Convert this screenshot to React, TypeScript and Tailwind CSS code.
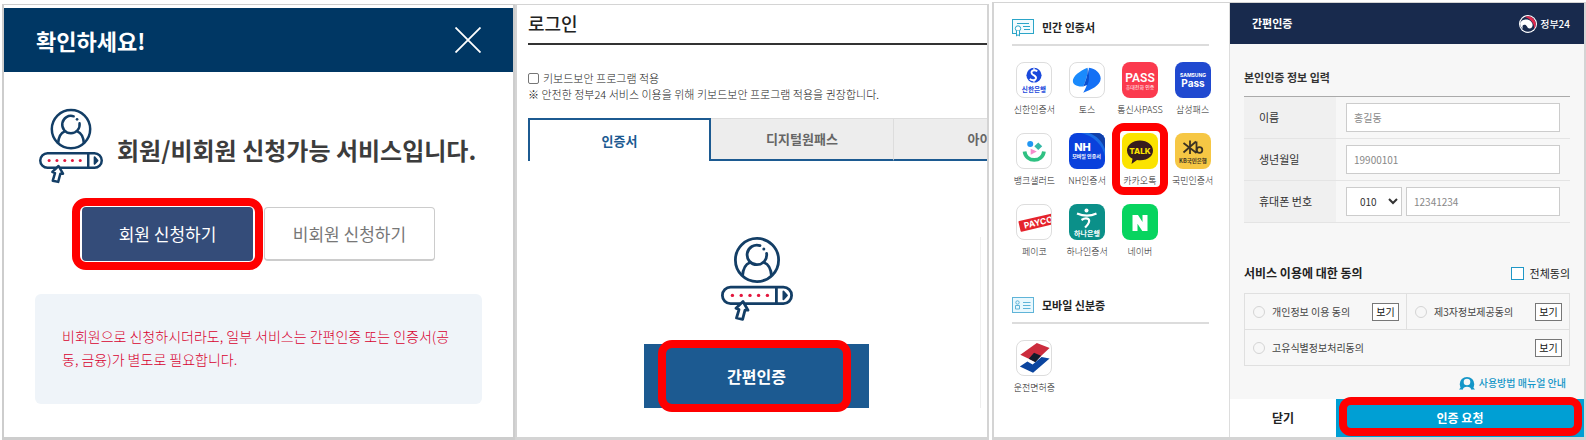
import type { ReactNode } from 'react'

function LoginIcon({ className }: { className?: string }) {
  return (
    <svg viewBox="0 0 72 84" className={className} fill="none" stroke="#133e66" strokeWidth="2.8" aria-hidden="true">
      <circle cx="36" cy="23" r="21.6" />
      <path d="M21.5 39C22 31 25 27 29 25.5" />
      <path d="M50.5 39C50 31 47 27 43 25.5" />
      <path d="M39 8.6A9.8 9.8 0 1 0 45.6 16.4" strokeLinecap="round" />
      <circle cx="42.8" cy="12" r="1.5" fill="#133e66" stroke="none" />
      <rect x="1.4" y="50.2" width="69.2" height="16.4" rx="8.2" fill="#fff" />
      <path d="M55.4 50v17" />
      <path d="M62.5 54.6l3.4 3.8-3.4 3.8z" fill="#133e66" strokeWidth="2" strokeLinejoin="round" />
      <g fill="#e3173e" stroke="none">
        <circle cx="11.4" cy="58.4" r="1.7" />
        <circle cx="20.2" cy="58.4" r="1.7" />
        <circle cx="29" cy="58.4" r="1.7" />
        <circle cx="37.6" cy="58.4" r="1.7" />
        <circle cx="46.4" cy="58.4" r="1.7" />
      </g>
      <path d="M22 64.500L27 73.200L24 73.200L21.600 82.400L15.500 81L18 72.600L15 71.200Z" fill="#fff" strokeWidth="2.8" strokeLinejoin="round" />
    </svg>
  )
}

/* Red guide box drawn over the control the reader has to press */
function Highlight({ className }: { className: string }) {
  return <span aria-hidden="true" className={`pointer-events-none absolute border-[#ff0000] ${className}`} />
}

function ConfirmPanel() {
  return (
    <section className="mt-1 flex flex-col border-x-2 border-t border-b-3 border-[#cdcdcd] bg-white pt-[3px]">
      <header className="flex h-16 items-center justify-between bg-[#003764] pr-8 pl-8">
        <h2 className="text-[22px] font-bold text-white">확인하세요!</h2>
        <button type="button" aria-label="닫기" className="text-white">
          <svg viewBox="0 0 26 26" className="h-[26px] w-[26px]" stroke="currentColor" strokeWidth="1.8">
            <path d="M0.5 0.5l25 25M25.5 0.5l-25 25" />
          </svg>
        </button>
      </header>

      <div className="flex items-center gap-[14px] pt-9 pl-[35px]">
        <LoginIcon className="h-[76px] w-16" />
        <p className="pt-2 text-2xl font-bold whitespace-nowrap text-[#3c3c3c]">회원/비회원 신청가능 서비스입니다.</p>
      </div>

      <div className="flex gap-[11px] pt-[23px] pl-[78px] text-[17px]">
        <div className="relative">
          <button type="button" className="h-[54px] w-[171px] rounded-sm bg-[#344c79] text-white">
            회원 신청하기
          </button>
          <Highlight className="-inset-x-[10px] -inset-y-[9px] rounded-[14px] border-8" />
        </div>
        <button type="button" className="h-[54px] w-[171px] rounded-sm border border-b-2 border-[#ccc] text-[#777]">
          비회원 신청하기
        </button>
      </div>

      <div className="mx-[31px] mt-[33px] mb-8 h-[110px] rounded-md bg-[#eff4f9] px-[27px] pt-[31px]">
        <p className="text-sm leading-[23px] font-light text-[#d8002f]">
          비회원으로 신청하시더라도, 일부 서비스는 간편인증 또는 인증서(공동, 금융)가 별도로 필요합니다.
        </p>
      </div>
    </section>
  )
}

function LoginPanel() {
  return (
    <section className="mt-1 flex flex-col overflow-hidden border-t border-r-2 border-b-3 border-l-2 border-[#d4d4d4] bg-white">
      <div className="pl-[11px]">
        <h2 className="h-10 border-b-2 border-[#333] pt-1 text-lg leading-7 font-medium text-[#222]">로그인</h2>

        <div className="pt-[25px] text-[11px] leading-4 whitespace-nowrap text-[#222]">
          <div className="flex items-center gap-1">
            <input
              id="keyboard-security"
              type="checkbox"
              className="h-[11px] w-[11px] appearance-none rounded-xs border border-[#767676]"
            />
            <label htmlFor="keyboard-security" className="font-light">키보드보안 프로그램 적용</label>
          </div>
          <p className="font-light">※ 안전한 정부24 서비스 이용을 위해 키보드보안 프로그램 적용을 권장합니다.</p>
        </div>

        <div role="tablist" className="mt-4 flex h-[43px] text-[13px] font-bold whitespace-nowrap">
          <button type="button" role="tab" aria-selected="true" className="w-[183px] shrink-0 border-2 border-b-0 border-[#1c5a91] text-[#1c5a91]">
            인증서
          </button>
          <button type="button" role="tab" aria-selected="false" className="w-[183px] shrink-0 border-t border-r border-b-2 border-t-[#ddd] border-r-[#ddd] border-b-[#1c5a91] bg-[#ededed] text-[#666]">
            디지털원패스
          </button>
          <button type="button" role="tab" aria-selected="false" className="w-[183px] shrink-0 border-t border-b-2 border-t-[#ddd] border-b-[#1c5a91] bg-[#ededed] text-[#666]">
            아이디
          </button>
        </div>
      </div>

      <div className="mt-[76px] mr-[6px] mb-7 ml-4 flex h-[171px] flex-col items-center justify-between border-r border-[#eee]">
        <LoginIcon className="h-[84px] w-[72px]" />
        <div className="relative">
          <button type="button" className="h-16 w-[225px] bg-[#1c5a91] text-base font-bold text-white">
            간편인증
          </button>
          <Highlight className="right-[18px] left-[14px] -inset-y-1 rounded-[14px] border-8" />
        </div>
      </div>
    </section>
  )
}

interface Cert {
  name: string
  icon: ReactNode
  outlined?: boolean
  picked?: boolean
}

const certs: Cert[] = [
  {
    name: '신한인증서',
    outlined: true,
    icon: (
      <>
        <circle cx="18" cy="13" r="8" fill="#1a49dc" />
        <path d="M21.500 8.800C18 6.500 14 8.500 15.800 11.300C17.200 13.500 21 13.500 20 16.500C19 18.900 15.800 18.800 13.500 17" fill="none" stroke="#fff" strokeWidth="2" />
        <path d="M18 5v2.500M18 19v2" stroke="#fff" strokeWidth="1.200" />
        <text x="18" y="31" fontSize="7" fontWeight="700" fill="#1a49dc" textAnchor="middle">신한은행</text>
      </>
    ),
  },
  {
    name: '토스',
    outlined: true,
    icon: (
      <>
        <path d="M20 5C27 6 32.500 10.500 32.500 16.500C32.500 24 22 28.500 14 31.500C16 28 17.500 25 18 22Z" fill="#1470f5" />
        <path d="M18.500 5C10 8.500 3 14 3 19C3 23.500 9 25 14 25C16 20 19.500 12 18.500 5Z" fill="#1a8afc" />
        <path d="M14 25C16 20 19.500 12 18.500 5C21 12 20.500 19 18.500 23Z" fill="#0a4fd0" />
      </>
    ),
  },
  {
    name: '통신사PASS',
    icon: (
      <>
        <rect width="36" height="36" fill="#fb3a4e" />
        <text x="18" y="19.500" fontSize="12" fontWeight="600" fill="#fff" textAnchor="middle" fontFamily="Roboto, sans-serif">PASS</text>
        <text x="18" y="27" fontSize="5" fill="#fff" textAnchor="middle">휴대전화 인증</text>
      </>
    ),
  },
  {
    name: '삼성패스',
    icon: (
      <>
        <rect width="36" height="36" fill="#2049d0" />
        <text x="18" y="14.500" fontSize="5" fontWeight="700" fill="#fff" textAnchor="middle" fontFamily="Inter, sans-serif">SAMSUNG</text>
        <text x="18" y="25" fontSize="10" fontWeight="700" fill="#fff" textAnchor="middle" fontFamily="Inter, sans-serif">Pass</text>
      </>
    ),
  },
  {
    name: '뱅크샐러드',
    outlined: true,
    icon: (
      <>
        <circle cx="14" cy="10.500" r="3.200" fill="#2196f3" />
        <path d="M22.500 9L26.700 13L22.500 17L18.300 13Z" fill="#35b8a6" />
        <path d="M14.500 15.500L21 18.500L14.500 22Z" fill="#f78ccb" />
        <path d="M8 18.500C9.500 30.500 27 30.500 28.500 18.500" fill="none" stroke="#2fc182" strokeWidth="4" />
      </>
    ),
  },
  {
    name: 'NH인증서',
    icon: (
      <>
        <rect width="36" height="36" fill="#0a41dc" />
        <path d="M12 0H36V24C34 12 25 3 12 0Z" fill="#1a6be4" />
        <path d="M20 0H36V16C33 8 28 3 20 0Z" fill="#113fa8" />
        <text x="13.500" y="18" fontSize="11" fontWeight="800" fill="#fff" textAnchor="middle" fontFamily="Inter, sans-serif">NH</text>
        <text x="17.500" y="25" fontSize="5" fontWeight="700" fill="#fff" textAnchor="middle">모바일 인증서</text>
      </>
    ),
  },
  {
    name: '카카오톡',
    picked: true,
    icon: (
      <>
        <rect width="36" height="36" fill="#fbe300" />
        <path d="M18 7.500C10.500 7.500 5 12 5 17.500C5 21 7 24 10.500 25.700L9.500 31L15 27C25 28.500 31 23.500 31 17.500C31 12 25.500 7.500 18 7.500Z" fill="#371d1e" />
        <text x="18" y="20.500" fontSize="8" fontWeight="800" fill="#fbe300" textAnchor="middle" fontFamily="Inter, sans-serif">TALK</text>
      </>
    ),
  },
  {
    name: '국민인증서',
    icon: (
      <>
        <rect width="36" height="36" fill="#f6c744" />
        <path d="M15 7.500V21M8.500 10L21.500 20M21 8.500L8.500 19.500M21.500 8.500V20" fill="none" stroke="#3c3223" strokeWidth="1.800" />
        <circle cx="24.500" cy="17" r="2.800" fill="none" stroke="#3c3223" strokeWidth="1.800" />
        <text x="18" y="29.500" fontSize="5.500" fontWeight="700" fill="#3c3223" textAnchor="middle">KB국민은행</text>
      </>
    ),
  },
  {
    name: '페이코',
    outlined: true,
    icon: (
      <g transform="rotate(-13 18 18)">
        <rect x="2" y="13.500" width="40" height="11.500" rx="1" fill="#e5232c" />
        <text x="7" y="22.700" fontSize="9" fontWeight="700" fill="#fff" fontFamily="Inter, sans-serif">PAYCO</text>
      </g>
    ),
  },
  {
    name: '하나인증서',
    icon: (
      <>
        <rect width="36" height="36" fill="#0b9089" />
        <circle cx="17.500" cy="6.500" r="2" fill="#fff" />
        <path d="M8 9.500C14 12 22 12 27.500 9.500M12.500 16C17 13 21.500 14.500 19.800 18.500C19 21 17.500 22 16 23.500" fill="none" stroke="#fff" strokeWidth="2.200" />
        <text x="18" y="32" fontSize="7" fontWeight="700" fill="#fff" textAnchor="middle">하나은행</text>
      </>
    ),
  },
  {
    name: '네이버',
    icon: (
      <>
        <rect width="36" height="36" fill="#07d45f" />
        <path d="M10.500 11H16L20.500 18V11H25.500V27H20.300L15.500 19.700V27H10.500Z" fill="#fff" />
      </>
    ),
  },
]

const mobileIds: Cert[] = [
  {
    name: '운전면허증',
    outlined: true,
    icon: (
      <>
        <path d="M21 2L34.500 7.300L19 22L3.500 14.500Z" fill="#cc2c3d" />
        <path d="M18 12.500L25.500 15.500L19.500 22.500L12.500 18.700Z" fill="#101c2c" />
        <path d="M3 27L11 21.800L16.500 25L26 17L34.500 18.500L17 33.500Z" fill="#0b459f" />
      </>
    ),
  },
]

function CertTile({ cert }: { cert: Cert }) {
  return (
    <button type="button" className="relative flex h-[71px] flex-col items-center gap-1">
      <svg
        viewBox="0 0 36 36"
        aria-hidden="true"
        className={`h-9 w-9 overflow-hidden rounded-lg ${cert.outlined ? 'border border-[#ddd]' : ''}`}
      >
        {cert.icon}
      </svg>
      <span className="text-[9px] leading-4 font-light whitespace-nowrap text-[#222]">{cert.name}</span>
      {cert.picked && <Highlight className="-top-[10px] -right-[2px] -left-[2px] h-[72px] rounded-xl border-8" />}
    </button>
  )
}

function CertGroup({ title, icon, items }: { title: string; icon: ReactNode; items: Cert[] }) {
  return (
    <div>
      <h3 className="mr-5 ml-[18px] flex h-[27px] items-start gap-2 border-b-2 border-[#dcdcdc] text-[11px] leading-4 font-bold text-[#222]">
        {icon}
        {title}
      </h3>
      <div className="grid grid-cols-4 pt-4 pr-[10px] pl-[14px]">
        {items.map((c) => (
          <CertTile key={c.name} cert={c} />
        ))}
      </div>
    </div>
  )
}

const certIcon = (
  <svg viewBox="0 0 22 18" className="h-[18px] w-[22px]" fill="none" stroke="#2ba5c8" aria-hidden="true">
    <rect x="0.500" y="0.500" width="21" height="14" fill="#f2fbfe" />
    <path d="M5 4.500h12M11 7.500h7M12 10.500h6" />
    <circle cx="6" cy="9.500" r="2.700" fill="#fff" />
    <path d="M4.500 12v5l1.500-1.300L7.500 17v-5" fill="#fff" />
  </svg>
)

const idIcon = (
  <svg viewBox="0 0 22 16" className="h-4 w-[22px]" fill="none" stroke="#5fb4d8" aria-hidden="true">
    <rect x="0.500" y="0.500" width="21" height="15" fill="#e9f8fe" />
    <circle cx="5.500" cy="5.500" r="1.700" />
    <path d="M3.500 12V8.500h4V12zM11 5.500h7.500M11 8.500h7.500M11 11.500h7.500" />
  </svg>
)

function ViewButton() {
  return (
    <button type="button" className="ml-auto h-[18px] w-[27px] border border-[#777] bg-white text-[10px] leading-4 text-[#111]">
      보기
    </button>
  )
}

function Agreement({ id, label }: { id: string; label: string }) {
  return (
    <div className="flex h-[35px] items-center gap-[7px] pr-[7px] pl-2">
      <input id={id} type="radio" className="h-3 w-3 appearance-none rounded-full border border-[#d4d4d4]" />
      <label htmlFor={id} className="text-[10px] whitespace-nowrap text-[#444]">{label}</label>
      <ViewButton />
    </div>
  )
}

const field = 'h-[29px] border border-[#ccc] bg-white text-[10px] font-normal'

function AuthForm() {
  return (
    <form className="flex flex-col bg-[#f7f7f7]">
      <header className="flex h-[41px] items-center justify-between bg-[#182a4d] pr-[14px] pl-[22px] text-white">
        <h2 className="text-[11px] font-bold">간편인증</h2>
        <div className="flex items-center gap-[3px] text-[10px] font-medium">
          <svg viewBox="0 0 18 18" className="h-[18px] w-[18px]" aria-hidden="true">
            <circle cx="9" cy="9" r="9" fill="#fff" />
            <circle cx="9" cy="9" r="7.800" fill="#182a4d" />
            <path d="M6 2A7.800 7.800 0 0 1 15 14C16 9 12 4 6 2Z" fill="#e0284c" />
            <path d="M1.200 8C3 4 9 3.500 12 6.500C15 9.500 13.500 13.500 10.500 13.500C8 13.500 8.500 10.500 6 9.800C3.500 9.200 3 11.500 4 14C2 12.500 1 10 1.200 8Z" fill="#fff" />
          </svg>
          정부24
        </div>
      </header>

      <div className="px-[14px] pt-[23px]">
        <h3 className="text-[11px] leading-5 font-bold text-[#333]">본인인증 정보 입력</h3>
        <table className="mt-[9px] w-full border-t border-[#aaa] text-[11px] text-[#333]">
          <tbody>
            <tr className="h-[42px] border-b border-[#e4e4e4]">
              <th className="w-[92px] bg-[#f0f0f0] pl-[15px] text-left font-normal">
                <label htmlFor="name">이름</label>
              </th>
              <td className="pr-[10px] pl-[10px]">
                <input id="name" placeholder="홍길동" className={`${field} block w-full px-[7px] placeholder:text-[#888]`} />
              </td>
            </tr>
            <tr className="h-[42px] border-b border-[#e4e4e4]">
              <th className="bg-[#f0f0f0] pl-[15px] text-left font-normal">
                <label htmlFor="birth">생년월일</label>
              </th>
              <td className="pr-[10px] pl-[10px]">
                <input id="birth" placeholder="19900101" className={`${field} block w-full px-[7px] placeholder:text-[#888]`} />
              </td>
            </tr>
            <tr className="h-[42px] border-b border-[#e4e4e4]">
              <th className="bg-[#f0f0f0] pl-[15px] text-left font-normal">
                <label htmlFor="phone">휴대폰 번호</label>
              </th>
              <td className="pr-[10px] pl-[10px]">
                <div className="flex gap-1">
                  <select aria-label="통신사 번호" className={`${field} w-14 pl-[9px] text-[#333]`}>
                    <option>010</option>
                  </select>
                  <input id="phone" placeholder="12341234" className={`${field} w-0 grow px-[7px] placeholder:text-[#888]`} />
                </div>
              </td>
            </tr>
          </tbody>
        </table>

        <div className="flex items-center justify-between pt-10 leading-5 text-[#222]">
          <h3 className="text-xs font-bold">서비스 이용에 대한 동의</h3>
          <div className="flex items-center gap-[6px]">
            <input id="agree-all" type="checkbox" className="h-[13px] w-[13px] appearance-none border border-[#1f97c7] bg-white" />
            <label htmlFor="agree-all" className="text-[11px]">전체동의</label>
          </div>
        </div>

        <div className="mt-[10px] border border-[#e0e0e0]">
          <div className="grid grid-cols-2 divide-x divide-[#e0e0e0] border-b border-[#e0e0e0]">
            <Agreement id="agree-privacy" label="개인정보 이용 동의" />
            <Agreement id="agree-third" label="제3자정보제공동의" />
          </div>
          <Agreement id="agree-unique" label="고유식별정보처리동의" />
        </div>

        <a href="#" className="mt-2 flex items-center justify-end gap-1 pr-1 text-[10px] leading-[18px] font-medium text-[#1496c8]">
          <svg viewBox="0 0 16 14" className="h-[14px] w-4" aria-hidden="true">
            <path d="M3 13.500A7.300 7.300 0 1 1 13 13.500Z" fill="#1496c8" />
            <path d="M0 13.500L3.500 9.500L4.500 13.500ZM16 13.500L12.500 9.500L11.500 13.500Z" fill="#1496c8" />
            <circle cx="8" cy="6" r="3.300" fill="#f7f7f7" />
            <path d="M3.500 14C4 9.500 12 9.500 12.500 14Z" fill="#f7f7f7" />
          </svg>
          사용방법 매뉴얼 안내
        </a>
      </div>

      <div className="mt-auto flex h-[38px] text-xs font-bold">
        <button type="button" className="w-[106px] bg-white text-[#222]">닫기</button>
        <div className="relative grow">
          <button type="submit" className="h-full w-full bg-[#009fd4] text-white">인증 요청</button>
          <Highlight className="-top-[2px] right-[2px] bottom-[1px] left-[3px] rounded-xl border-8" />
        </div>
      </div>
    </form>
  )
}

function SimpleAuthPanel() {
  return (
    <section className="mt-[2px] ml-[3px] grid grid-cols-[2fr_3fr] border-t border-r-2 border-b-3 border-l-2 border-[#d4d4d4] bg-white">
      <div className="flex flex-col gap-[22px] border-r border-[#ddd] pt-4">
        <CertGroup title="민간 인증서" icon={certIcon} items={certs} />
        <CertGroup title="모바일 신분증" icon={idIcon} items={mobileIds} />
      </div>
      <AuthForm />
    </section>
  )
}

export default function App() {
  return (
    <main className="grid min-h-screen grid-cols-[513fr_474fr_597fr] bg-white pl-[2px] font-['Noto_Sans_CJK_KR',sans-serif]">
      <ConfirmPanel />
      <LoginPanel />
      <SimpleAuthPanel />
    </main>
  )
}
